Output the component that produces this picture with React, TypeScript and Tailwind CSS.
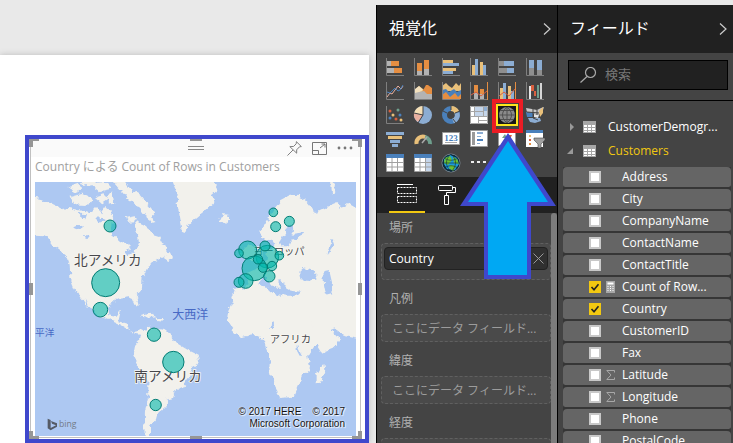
import { useState, type ReactNode } from "react";

const GRAY = "#7f7f7f";
const SILVER = "#b3b3b3";
const ORANGE = "#e58e42";
const BLUE = "#8cadd3";
const DEEP = "#4a80bb";
const SAND = "#e9c07a";
const RED = "#d9603f";
const PINK = "#e8b0a0";
const TEAL = "#6fa08e";

type Bar = [number, number, number, number, string];

function Bars({ items }: { items: Bar[] }) {
  return (
    <g shapeRendering="crispEdges">
      {items.map(([x, y, w, h, fill], i) => (
        <rect key={i} x={x} y={y} width={w} height={h} fill={fill} />
      ))}
    </g>
  );
}

function Axis() {
  return <path d="M.5 0v17.5H18" stroke={GRAY} fill="none" />;
}

const tableGlyph = (tint: string) => (
  <>
    <path fill="#fff" d="M1 1h16v16H1z" />
    <path fill={tint} d="M11 4h6v13h-6z" />
    <path d="M.5 4v13.5h17V4M6 4v13M11.5 4v13M1 8.500h16M1 13h16" stroke="#a0a0a0" fill="none" />
    <path fill={DEEP} d="M0 0h18v4H0z" />
  </>
);

const visuals: { name: string; art: ReactNode }[] = [
  { name: "積み上げ横棒グラフ", art: <><Axis /><Bars items={[[1, 3, 4, 5, SILVER], [5, 3, 8, 5, ORANGE], [1, 10, 7, 5, SILVER], [8, 10, 8, 5, ORANGE]]} /></> },
  { name: "積み上げ縦棒グラフ", art: <><Axis /><Bars items={[[3, 5, 5, 8, ORANGE], [3, 13, 5, 4, SILVER], [10, 2, 5, 9, ORANGE], [10, 11, 5, 6, SILVER]]} /></> },
  { name: "集合横棒グラフ", art: <><Axis /><Bars items={[[1, 2, 10, 3, SAND], [1, 5, 16, 3, BLUE], [1, 10, 13, 3, SAND], [1, 13, 10, 3, BLUE]]} /></> },
  { name: "集合縦棒グラフ", art: <><Axis /><Bars items={[[2, 7, 3, 10, SAND], [5, 1, 3, 16, BLUE], [10, 4, 3, 13, SAND], [13, 7, 3, 10, BLUE]]} /></> },
  { name: "100% 積み上げ横棒", art: <><Axis /><Bars items={[[1, 3, 5, 5, "#8f8f8f"], [6, 3, 10, 5, BLUE], [1, 10, 8, 5, "#8f8f8f"], [9, 10, 7, 5, BLUE]]} /></> },
  { name: "100% 積み上げ縦棒", art: <><Axis /><Bars items={[[3, 2, 5, 8, BLUE], [3, 10, 5, 7, "#8f8f8f"], [11, 2, 5, 10, BLUE], [11, 12, 5, 5, "#8f8f8f"]]} /></> },
  { name: "折れ線グラフ", art: <><Axis /><path d="M1 15l3-4 2 1 6-8 3 3 2-3" stroke={PINK} fill="none" /><path d="M1 10l3 1 5-5 3 3 2-1 3-5" stroke={DEEP} fill="none" /></> },
  { name: "面グラフ", art: <><path fill={SAND} d="M1 8l4-4 4 3 3 3v7H1z" /><path fill="#f3e0bd" d="M1 7l4-3 4 4-8 5z" /><path fill={ORANGE} d="M8 10l4-7 2 0 4 3v8l-7-2z" /><path fill={SILVER} d="M1 11l4-1 5-1 3 3 5 0v5H1z" /><Axis /></> },
  { name: "積み上げ面グラフ", art: <><path fill={SAND} d="M0 4l4-3 3 3 3 2 4-5 3 3 2-3v8H0z" /><path fill={DEEP} d="M0 8l4-1 3 3 5-3 3 3 4-2v9H0z" /><path fill={ORANGE} d="M0 13l4-3 4 5 5-4 3 4 3-3v5H0z" /><Axis /></> },
  { name: "折れ線と積み上げ縦棒", art: <><Axis /><Bars items={[[4, 3, 4, 8, ORANGE], [4, 11, 4, 6, SILVER], [10, 7, 4, 5, ORANGE], [10, 12, 4, 5, SILVER], [17, 0, 1, 18, ORANGE]]} /><path d="M1 13l5-3 5 4 6-5" stroke={RED} fill="none" /></> },
  { name: "折れ線と集合縦棒", art: <><Axis /><Bars items={[[2, 6, 3, 11, SAND], [5, 1, 3, 16, BLUE], [10, 4, 3, 13, SAND], [13, 9, 3, 8, BLUE], [17, 0, 1, 18, ORANGE]]} /><path d="M1 14l5-4 5 4 6-7" stroke={RED} fill="none" /></> },
  { name: "ウォーターフォール図", art: <><Axis /><Bars items={[[3, 4, 2, 13, "#e6e6e6"], [5, 3, 3, 6, RED], [8, 9, 2, 5, RED], [11, 3, 2, 13, TEAL], [14, 1, 2, 16, "#d5d5d5"]]} /></> },
  { name: "散布図", art: <><Axis />{[[4, 5, RED], [12, 4, TEAL], [7, 9, SAND], [14, 9, DEEP], [4, 12, DEEP], [10, 13, RED], [15, 14, SAND]].map(([x, y, c], i) => <circle key={i} cx={x} cy={y} r="1.500" fill={String(c)} />)}</> },
  { name: "円グラフ", art: <><circle cx="9" cy="9" r="9" fill={BLUE} /><path fill="#f5dfb6" d="M9 9V0a9 9 0 0 0-9 7z" /><path fill={PINK} d="M9 9L0 7a9 9 0 0 0 4 9z" /><path d="M9 0v9L4 17M9 9L0 7" stroke="#444" fill="none" /></> },
  { name: "ドーナツ グラフ", art: <><circle cx="9" cy="9" r="6.500" stroke={DEEP} strokeWidth="5" fill="none" /><path d="M9 2.500a6.500 6.500 0 0 1 6 4" stroke={SAND} strokeWidth="5" fill="none" /><path d="M15 7a6.500 6.500 0 0 1-4 8" stroke={BLUE} strokeWidth="5" fill="none" /><path d="M9 0v4M13 7l5-2M11 13l3 4M1 5l4 2" stroke="#444" /></> },
  { name: "ツリーマップ", art: <><path fill="#fff" d="M0 0h18v18H0z" /><path fill="#c4d5ea" d="M5 1h12v9H5z" /><path fill={BLUE} d="M14 1h3v4h-3z" /><path d="M.5.500h17v17H.5zM4.500 0v10M13.500 0v10M5 5.500h8M0 10.500h18M8.500 11v7M0 5.500h4M9 14.500h9" stroke="#a5a5a5" fill="none" /></> },
  { name: "マップ", art: <><circle cx="9" cy="9" r="8" fill="#8a8a8a" /><path d="M9 1v16M1 9h16M3 4.500h12M3 13.500h12M9 1c-6 5-6 11 0 16M9 1c6 5 6 11 0 16" stroke="#505050" fill="none" /></> },
  { name: "塗り分け地図", art: <><path fill="#c9c9c9" d="M0 2l6 1 5 1 4-2 3-1-2 6-4 2-6-2-5-1z" /><path fill={DEEP} d="M0 6l7 1v4l-6 0z" /><path fill={SAND} d="M13 5l4-4v6l-3 4z" /><path fill={BLUE} d="M2 12l7 0 5 0 1 3-6 2-5-1z" /><path fill="#e6e6e6" d="M8 8l5 1-1 3-4-1z" /><path d="M7 3v9l5 2M1 6l12 1M11 4v5" stroke="#444" fill="none" /></> },
  { name: "じょうごグラフ", art: <Bars items={[[0, 2, 18, 3, BLUE], [2, 6, 14, 3, SAND], [4, 10, 10, 3, BLUE], [6, 14, 6, 3, BLUE]]} /> },
  { name: "ゲージ", art: <><path d="M2.500 14a6.500 6.500 0 0 1 9-7" stroke={SAND} strokeWidth="4" fill="none" /><path d="M11 7a6.500 6.500 0 0 1 5 7" stroke={TEAL} strokeWidth="4" fill="none" /><path d="M8 13l5-6" stroke="#aaa" strokeWidth="1.500" /></> },
  { name: "カード", art: <><path fill="#fff" stroke="#9a9a9a" d="M.5 2.500h17v12H.5z" /><text x="9" y="10.500" textAnchor="middle" fontSize="9" fontWeight="700" fill={DEEP} fontFamily="Liberation Serif, serif">123</text><path d="M3 12.500h12" stroke="#a8a8a8" /></> },
  { name: "複数の行カード", art: <><path fill="#fff" stroke="#9a9a9a" d="M.5.500h17v16H.5z" /><path fill="#9a9a9a" d="M2 2h3v13H2z" /><Bars items={[[7, 2, 6, 2, BLUE], [7, 6, 4, 1, BLUE], [7, 9, 6, 2, DEEP], [7, 13, 3, 1, BLUE]]} /></> },
  { name: "KPI", art: <><path fill="#fff" stroke="#9a9a9a" d="M.5 2.500h17v13H.5z" /><path fill={TEAL} d="M4 8l3-4 2 4z" /><path fill={RED} d="M10 5h4l-2 4z" /></> },
  { name: "スライサー", art: <><path fill="#fff" d="M0 0h17v17H0z" /><path fill={DEEP} d="M0 0h17v3H0z" /><Bars items={[[3, 5, 2, 2, SAND], [3, 9, 2, 2, RED], [3, 13, 2, 2, ORANGE]]} /><path fill="#a0a0a0" stroke="#444" strokeWidth=".6" d="M8 8h11v2l-4 4v4h-3v-4L8 10z" /></> },
  { name: "テーブル", art: tableGlyph("#ffffff") },
  { name: "マトリックス", art: tableGlyph("#c4d5ea") },
  { name: "ArcGIS Maps", art: <><circle cx="9" cy="9" r="9" fill="#0d2c3c" stroke="#9ab" strokeWidth=".6" /><path fill="#1d9bd8" d="M2 5l6-4 7 3 2 6-4 6-8-1-3-5z" /><path fill="#6cc230" d="M3 4l5-2 2 4-4 5-4-2zM11 3l4 2 2 5-5-1zM8 11l6 1-3 5-4-3z" /><path d="M9 0c-7 6-5 13 0 18M9 0c7 6 5 13 0 18M0 9h18M2 4c5 3 9 3 14 0M2 14c5-3 9-3 14 0" stroke="#0d2c3c" strokeWidth=".6" fill="none" /></> },
  { name: "その他のビジュアル", art: <path fill="#eee" d="M1 7h3v2H1zM7 7h3v2H7zM13 7h3v2h-3z" /> },
];

type Spot = [number, number, number];
const spots: Spot[] = [
  [225, 132, 18], [212, 302, 42], [196, 383, 22], [357, 458, 20], [415, 540, 32], [362, 669, 17],
  [715, 91, 13], [763, 118, 15], [722, 134, 15], [638, 204, 27], [612, 214, 13], [697, 224, 34],
  [690, 192, 15], [733, 221, 13], [658, 259, 37], [669, 232, 14], [684, 257, 14], [711, 252, 14],
  [703, 283, 17], [632, 297, 22], [612, 301, 15],
];

function WorldMap() {
  return (
    <svg viewBox="0 0 963 762" preserveAspectRatio="xMidYMid slice" className="absolute inset-0 size-full" role="img" aria-label="Country による Count of Rows in Customers">
      <defs>
        <filter id="coast" x="-5%" y="-5%" width="110%" height="110%">
          <feTurbulence type="fractalNoise" baseFrequency="0.05" numOctaves="3" seed="4" />
          <feDisplacementMap in="SourceGraphic" scale="22" xChannelSelector="R" yChannelSelector="G" />
        </filter>
      </defs>
      <rect width="963" height="762" fill="#adc8f2" />
      <g filter="url(#coast)">
        <g fill="#f2f1ec">
          <path d="M-20 46L30 58 55 70 80 82 100 78 130 84 165 90 180 75 200 95 215 75 232 95 240 130 232 160 255 180 285 196 300 215 312 185 308 150 300 120 325 130 345 145 355 160 372 165 385 190 400 215 372 232 345 245 335 268 320 285 318 310 322 325 302 345 308 372 298 368 288 345 255 350 228 362 216 380 220 400 245 404 258 385 250 418 275 425 282 445 302 452 320 445 342 434 358 438 385 444 410 462 428 485 455 502 488 518 492 535 478 555 466 585 445 614 425 622 415 645 395 650 400 664 385 680 365 695 360 715 345 735 345 780 330 780 328 735 330 690 340 645 340 595 315 560 295 520 300 492 315 475 318 458 300 455 275 440 255 428 225 415 195 404 175 385 160 365 150 345 160 378 148 360 135 345 118 320 106 290 104 245 95 222 60 195 45 175 25 163-20 160z" />
          <path d="M105 45l35-10 30 15-15 22-38-2zM100 15l30-10 15 12-20 12zM165 5l45-5 20 20-35 8zM180 45l25-8 15 15-18 12zM215 40l18-5 5 30-16-5zM225-10h40l20 30 30 20 35 40 12 45-30-20-25-35-30-20-25-30zM130-10h45l10 12-40 10zM270 105l25-5 5 18-25 2zM382 228l22-18 10 18-14 12z" />
          <path d="M405-20L416 10 428 35 425 65 432 105 440 145 452 150 460 130 475 115 498 95 515 80 540 56 527 40 548 22 525-20z" />
          <path d="M550 107l15-7 20 2v12l-17 12-16-8z" />
          <path d="M678 172l2-28 22-36 18-30 15-20 30-16 22-4 25 15 15 18 15 20-15 14-17-4-6 22-14 22-20 4 3-24-14 4-14 30-10 18-12 14-12-16z" />
          <path d="M690 250l5-40 25-22 30-8 22-20 5-40 38-25 18 2 35-18 35-15 20 14 20-15 30 18v390l-40-8-20-14-16-10-12 4 30 30-22 25-36 14-16-26-16-38-14-28-10-25-30-2-28-8-12-40-14-22-20-8-12-14-8 20-30 14-20 26-30 2-8-16 10-28 35-2 6-24-10-18 25-10z" />
          <path d="M628 205l10-22 15 8 8 28-8 14-25 2zM612 210l10-3 2 12-12 6z" />
          <path d="M615 319l50-10 25 0 10 20 25 9 40 6 30 6 10 20 15 34 18 34 30 6-5 20-28 30-15 25 5 40-25 20-5 25-15 35-15 10-30 2-8-27-17-30-7-30 2-40-15-35-10-25-25-5-40 7-25-27-15-25 5-30 15-30z" />
          <path d="M865 546l3 23-11 35-12-5 0-25 10-18zM885-10l15 20-5 30-8-12zM315 400l25-8 25 14-20 2zM365 408l22 0-2 8-18-2z" />
        </g>
        <g fill="#adc8f2">
          <path d="M235 105l30 5 15 15 20 10 5 50-14 20-10-28-30-12-20-25zM265 205l20-6 10 12-12 4-12 10zM790 272l15-14 30 8 10 20-20 8-32-2zM865 268l18-4 8 34-2 36-16 4-6-30zM705 422l8-4 4 20-14 0zM785 486l8 18 8 16-6 6-10-18zM760 150l20 8 22-5-8 15-26 5-10 20-26 0 12-18zM875 215l18-44 5 2-16 46zM110 135l22-10 15 8-16 12zM145 160l16 0 8 8-18 3zM180 110l20-3 10 8-18 8zM135 95l18 2-5 15-12-3z" />
          <path d="M670 305l14-20 16 10 24 25 14 0-10-25 20 8 10 22 35 4-12 12-30 0-40-8-10-16z" />
        </g>
      </g>
      <g fontFamily="'Noto Sans CJK JP', sans-serif" fill="#48484c" stroke="#f7f6f2" strokeWidth="5" paintOrder="stroke">
        <text x="117" y="250" fontSize="41">北アメリカ</text>
        <text x="298" y="597" fontSize="41">南アメリカ</text>
        <text x="654" y="220" fontSize="31">ヨーロッパ</text>
        <text x="704" y="484" fontSize="31">アフリカ</text>
      </g>
      <g fontFamily="'Noto Sans CJK JP', sans-serif" fill="#4769c4">
        <text x="412" y="410" fontSize="36">大西洋</text>
        <text x="0" y="462" fontSize="29">平洋</text>
      </g>
      <g fill="#01b8aa" fillOpacity=".6" stroke="#037c74" strokeWidth="3">
        {spots.map(([x, y, r], i) => <circle key={i} cx={x} cy={y} r={r} />)}
      </g>
      <path fill="#555b66" d="M38 710l9 4v24l16-8-12-5-3-8 18 7v10l-19 11-9-6z" />
      <text x="72" y="734" fontSize="26" fill="#737a86" fontFamily="'Open Sans', sans-serif">bing</text>
    </svg>
  );
}

function Handle({ place }: { place: string }) {
  return <span className={`absolute bg-[#969696] ${place}`} />;
}

function MapVisual() {
  return (
    <section className="flex min-h-0 flex-1 border-4 border-[#3f48cc] bg-white pr-[3px]">
      <div className="relative flex min-w-0 flex-1 flex-col">
        <span className="absolute inset-y-0 left-px w-px bg-[#c0c0c0]" />
        <span className="absolute inset-y-0 right-px w-px bg-[#c0c0c0]" />
        <span className="absolute inset-x-0 bottom-px h-px bg-[#c0c0c0]" />
        <header className="mx-0.5 flex h-[18px] shrink-0 items-center justify-end gap-2.5 bg-[#fafafa] pr-[7px] text-[#777]">
          <span className="absolute left-1/2 h-1 w-4 -translate-x-1/2 border-y border-[#888]" />
          <button type="button" aria-label="ピン留め">
            <svg width="15" height="15" viewBox="0 0 16 16" fill="none" stroke="currentColor"><path d="M10 .7l5.300 5.200-2 .3-3 3.200v3.600L3 6l4-.2L9.800 3zM6.500 9.500L.5 15.500" /></svg>
          </button>
          <button type="button" aria-label="フォーカス モード">
            <svg width="15" height="13" viewBox="0 0 15 13" fill="none" stroke="currentColor"><path d="M.5.500h14v12H.5zM.5 8.500h6v4M8 6l5-4M9.500 2H13v3.500" /></svg>
          </button>
          <button type="button" aria-label="その他のオプション">
            <svg width="16" height="4" viewBox="0 0 16 4" fill="currentColor"><circle cx="2" cy="2" r="1.400" /><circle cx="8" cy="2" r="1.400" /><circle cx="14" cy="2" r="1.400" /></svg>
          </button>
        </header>
        <h2 className="h-[25px] shrink-0 truncate pl-[6px] text-xs leading-5 text-[#a0a0a0]">Country による Count of Rows in Customers</h2>
        <div className="relative mr-[6px] mb-[3px] ml-[6px] min-h-0 flex-1 overflow-hidden">
          <WorldMap />
          <p className="absolute right-[11px] bottom-[6px] text-right font-['Liberation_Sans',sans-serif] text-[10px] leading-3 text-[#111] [text-shadow:0_0_2px_#fff,1px_1px_1px_#fff]">
            © 2017 HERE &nbsp;&nbsp; © 2017
            <br />
            Microsoft Corporation
          </p>
        </div>
        <Handle place="left-0 top-0 h-2 w-1" />
        <Handle place="left-0 top-0 h-0.5 w-2.5" />
        <Handle place="right-0 top-0 h-2 w-1" />
        <Handle place="right-0 top-0 h-0.5 w-2.5" />
        <Handle place="left-0 bottom-0 h-2 w-1" />
        <Handle place="left-0 bottom-0 h-[3px] w-2.5" />
        <Handle place="right-0 bottom-0 h-2 w-1" />
        <Handle place="right-0 bottom-0 h-[3px] w-2.5" />
        <Handle place="left-0 top-1/2 h-3 w-1 -translate-y-1/2" />
        <Handle place="right-0 top-1/2 h-3 w-1 -translate-y-1/2" />
        <Handle place="left-1/2 top-0 h-0.5 w-3 -translate-x-1/2" />
        <Handle place="left-1/2 bottom-0 h-[3px] w-3 -translate-x-1/2" />
      </div>
    </section>
  );
}

function PanelHeader({ title }: { title: string }) {
  return (
    <header className="flex h-12 shrink-0 items-center justify-between bg-[#212121] px-3 text-white">
      <h2 className="pb-1 font-['Noto_Sans_CJK_JP',sans-serif] text-base font-normal">{title}</h2>
      <button type="button" aria-label={`${title}を閉じる`} className="-mr-1.5">
        <svg width="8" height="12" viewBox="0 0 8 12" fill="none" stroke="#ccc" strokeWidth="1.200"><path d="M1 .5L7 6 1 11.500" /></svg>
      </button>
    </header>
  );
}

function Well({ label, children, first }: { label: string; children?: ReactNode; first?: boolean }) {
  return (
    <div>
      <h3 className={`flex items-center pl-2 text-xs text-[#b0b0b0] ${first ? "h-[30px]" : "h-[34px] pt-1"}`}>{label}</h3>
      <div className="rounded-sm border border-dashed border-[#606060] bg-[#4a4a4a]">
        {children ?? <p className="h-[26px] truncate pl-[10px] text-xs leading-[27px] text-[#9c9c9c]">ここにデータ フィールド...</p>}
      </div>
    </div>
  );
}

function Visualizations() {
  return (
    <aside className="relative flex w-[182px] shrink-0 flex-col border-x border-black bg-[#444]">
      <PanelHeader title="視覚化" />
      <div className="grid h-[124px] shrink-0 grid-cols-[repeat(6,18px)] content-start gap-x-2.5 gap-y-1.5 pt-[5px] pl-[9px]">
        {visuals.map(({ name, art }) => (
          <button
            key={name}
            type="button"
            aria-label={name}
            className={name === "マップ" ? "-m-0.5 size-[22px] border-2 border-[#fbe51e] bg-[#181818]" : "size-[18px]"}
          >
            <svg width="18" height="18" viewBox="0 0 18 18" className="block overflow-visible">{art}</svg>
          </button>
        ))}
      </div>
      <nav className="flex h-9 shrink-0 bg-[#212121] pl-3">
        <button type="button" aria-label="フィールド" className="flex w-9 items-center justify-center border-b-2 border-[#f2c811]">
          <svg width="20" height="20" viewBox="0 0 20 20" fill="none" stroke="#fff"><path d="M0 .5h16" /><path strokeDasharray="2 1" d="M.5 3.500h19v6H.5zM.5 12.500h19v6H.5z" /></svg>
        </button>
        <button type="button" aria-label="書式" className="flex w-11 items-center justify-center">
          <svg width="19" height="20" viewBox="0 0 19 20" fill="none" stroke="#fff"><rect x=".5" y=".5" width="14" height="5" rx="1" /><path d="M15 2.500h2.500v5h-9V10M6.500 10.500h4v9h-4z" /></svg>
        </button>
      </nav>
      <div className="flex min-h-0 flex-1 overflow-hidden pl-1">
        <div className="min-w-0 flex-1">
          <Well label="場所" first>
            <div className="mx-0.5 mt-[3px] mb-[9px] flex h-[23px] items-center justify-between rounded-sm border border-[#222] bg-[#303030] pr-[3px] pl-1 text-xs font-medium text-white">
              Country
              <button type="button" aria-label="Country を削除">
                <svg width="11" height="11" viewBox="0 0 11 11" stroke="#999"><path d="M.5.500l10 10M10.500.500l-10 10" /></svg>
              </button>
            </div>
          </Well>
          <Well label="凡例" />
          <Well label="緯度" />
          <Well label="経度" />
        </div>
        <div className="w-1.5 rounded-t-full bg-[#7c7c7c]" />
      </div>
      <span className="absolute top-[94px] left-[115px] h-[34px] w-[31px] border-4 border-[#ec1c24]" />
      <svg width="96" height="147" viewBox="0 0 96 147" className="absolute top-[128px] left-[83px]">
        <path fill="#3f48cc" d="M48 0l48 73H71v73H24V73H0z" />
        <path fill="#00a8f3" d="M48 8l40 61H67v73H28V69H8z" />
      </svg>
    </aside>
  );
}

function TableGlyph() {
  return (
    <svg width="13" height="12" viewBox="0 0 13 12" className="shrink-0"><path fill="#a6a6a6" d="M0 0h13v12H0z" /><path fill="#fff" d="M1 4h3v2H1zM5 4h3v2H5zM9 4h3v2H9zM1 7h3v2H1zM5 7h3v2H5zM9 7h3v2H9zM1 10h3v1H1zM5 10h3v1H5zM9 10h3v1H9z" /></svg>
  );
}

type Field = { name: string; kind?: "calc" | "sum"; checked?: boolean };
const fields: Field[] = [
  { name: "Address" }, { name: "City" }, { name: "CompanyName" }, { name: "ContactName" }, { name: "ContactTitle" },
  { name: "Count of Row...", kind: "calc", checked: true }, { name: "Country", checked: true }, { name: "CustomerID" },
  { name: "Fax" }, { name: "Latitude", kind: "sum" }, { name: "Longitude", kind: "sum" }, { name: "Phone" }, { name: "PostalCode" },
];

function FieldRow({ name, kind, checked = false }: Field) {
  const [on, setOn] = useState(checked);
  return (
    <label className="flex h-[22px] shrink-0 items-center rounded border-b-2 border-[#363636] bg-[#656565] pl-[26px] text-xs font-medium text-white">
      <span className="relative flex">
        <input type="checkbox" checked={on} onChange={() => setOn(!on)} className="size-3 appearance-none border-2 border-[#c8c8c8] bg-white checked:border-[#f2c811] checked:bg-[#f2c811]" />
        {on && <svg viewBox="0 0 12 12" className="pointer-events-none absolute inset-0" fill="none" stroke="#222" strokeWidth="1.600"><path d="M2.500 6l2.500 2.800 4.500-5.600" /></svg>}
      </span>
      <span className="flex w-[21px] items-center pl-[5px]">
        {kind === "calc" && <svg width="9" height="12" viewBox="0 0 9 12"><path fill="#a6a6a6" d="M0 0h9v12H0z" /><path fill="#fff" d="M1.500 1.500h6v2h-6zM1.500 5h1v1h-1zM4 5h1v1H4zM6.500 5h1v1h-1zM1.500 7h1v1h-1zM4 7h1v1H4zM6.500 7h1v1h-1zM1.500 9h1v1h-1zM4 9h1v1H4zM6.500 9h1v1h-1z" /></svg>}
        {kind === "sum" && <svg width="9" height="10" viewBox="0 0 9 10" fill="none" stroke="#a8a8a8"><path d="M8.500 2.500v-2H.8L5 5 .8 9.500h7.700v-2" /></svg>}
      </span>
      {name}
    </label>
  );
}

function Fields() {
  return (
    <aside className="flex w-[175px] shrink-0 flex-col bg-[#444]">
      <PanelHeader title="フィールド" />
      <div className="h-12 shrink-0 border-b border-black pt-[7px] pr-[5px] pl-[10px]">
        <label className="flex h-[30px] items-center gap-2 border border-black bg-[#212121] pl-[11px]">
          <svg width="17" height="16" viewBox="0 0 17 16" fill="none" stroke="#aaa" strokeWidth="1.200" className="shrink-0"><circle cx="10.500" cy="5.500" r="5" /><path d="M7 9.500L.5 15.500" /></svg>
          <input type="search" aria-label="検索" placeholder="検索" className="w-full min-w-0 bg-transparent text-[13px] text-white outline-none placeholder:text-[#777]" />
        </label>
      </div>
      <div className="flex min-h-0 flex-1 flex-col overflow-hidden pt-[14px] text-xs font-medium">
        <button type="button" className="flex h-6 shrink-0 items-center pl-3 text-left text-white">
          <svg width="13" height="8" viewBox="0 0 13 8" fill="#999"><path d="M0 0l4 4-4 4z" /></svg>
          <TableGlyph />
          <span className="pl-3">CustomerDemogr...</span>
        </button>
        <button type="button" className="flex h-6 shrink-0 items-center pl-[9px] text-left text-[#f2c811]">
          <svg width="16" height="6" viewBox="0 0 16 6" fill="#999"><path d="M6 0v6H0z" /></svg>
          <TableGlyph />
          <span className="pl-3">Customers</span>
        </button>
        <div className="mt-1 mr-0.5 ml-[5px] flex flex-col bg-[#363636]">
          {fields.map((f) => <FieldRow key={f.name} {...f} />)}
        </div>
      </div>
    </aside>
  );
}

export default function App() {
  return (
    <div className="flex h-screen overflow-hidden bg-[#e9e9e9] font-['Open_Sans','Noto_Sans_CJK_JP',sans-serif]">
      <main className="flex min-w-0 flex-1 pt-[55px] pr-[7px]">
        <div className="flex min-w-0 flex-1 flex-col bg-white pt-20 pl-[25px] shadow-[0_0_6px_#bbb]">
          <MapVisual />
        </div>
      </main>
      <div className="flex shrink-0 pt-[5px]">
        <Visualizations />
        <Fields />
      </div>
    </div>
  );
}
